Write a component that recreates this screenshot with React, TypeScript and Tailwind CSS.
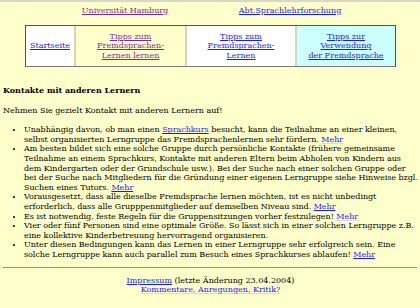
const serif = { fontFamily: '"DejaVu Serif", serif' };

function A({ children, visited = false, faint = false }: { children: React.ReactNode; visited?: boolean; faint?: boolean }) {
  return (
    <a
      className={
        (visited ? "text-[#7a2a9a]" : "text-[#1a1aff]") +
        " underline " +
        (faint ? "decoration-[#d8d8e8]" : "")
      }
    >
      {children}
    </a>
  );
}

const items: React.ReactNode[] = [
  <>
    Unabhängig davon, ob man einen <A>Sprachkurs</A> besucht, kann die Teilnahme an einer kleinen,
    selbst organisierten Lerngruppe das Fremdsprachenlernen sehr fördern. <A faint>Mehr</A>
  </>,
  <>
    Am besten bildet sich eine solche Gruppe durch persönliche Kontakte (frühere gemeinsame Teilnahme an
    einem Sprachkurs, Kontakte mit anderen Eltern beim Abholen von Kindern aus dem Kindergarten oder der
    Grundschule usw.). Bei der Suche nach einer solchen Gruppe oder bei der Suche nach Mitgliedern für die
    Gründung einer eigenen Lerngruppe siehe Hinweise bzgl. Suchen eines Tutors. <A>Mehr</A>
  </>,
  <>
    Vorausgesetzt, dass alle dieselbe Fremdsprache lernen möchten, ist es nicht unbedingt erforderlich,
    dass alle Grupppenmitglieder auf demselben Niveau sind. <A>Mehr</A>
  </>,
  <>
    Es ist notwendig, feste Regeln für die Gruppensitzungen vorher festzulegen! <A faint>Mehr</A>
  </>,
  <>
    Vier oder fünf Personen sind eine optimale Größe. So lässt sich in einer solchen Lerngruppe z.B. eine
    kollektive Kinderbetreuung hervorragend organisieren.
  </>,
  <>
    Unter diesen Bedingungen kann das Lernen in einer Lerngruppe sehr erfolgreich sein. Eine solche
    Lerngruppe kann auch parallel zum Besuch eines Sprachkurses ablaufen! <A>Mehr</A>
  </>,
];

export default function App() {
  return (
    <div
      style={serif}
      className="w-[420px] h-[308px] overflow-hidden bg-[#ffffcc] border-t-2 border-[#d8d8c8] text-[8px] leading-[9.6px] text-black"
    >
      {/* header links */}
      <div className="flex ml-[40px] pt-[4px] h-[23px]">
        <div className="w-[170px] text-center">
          <A visited>Universität Hamburg</A>
        </div>
        <div className="w-[160px] text-center">
          <A>Abt.Sprachlehrforschung</A>
        </div>
      </div>

      {/* navigation table */}
      <div className="ml-[25px] w-[371px] h-[42px] flex border border-[#555] border-b-[#777]">
        <div className="w-[50px] bg-white flex items-center justify-center border-r-2 border-[#d4d4c4]">
          <A>Startseite</A>
        </div>
        <div className="w-[111px] flex items-center justify-center text-center border-r-2 border-[#d4d4c4]">
          <A visited>
            Tipps zum
            <br />
            Fremdsprachen-
            <br />
            Lernen lernen
          </A>
        </div>
        <div className="w-[110px] bg-white flex items-center justify-center text-center border-r-2 border-[#d4d4c4]">
          <A>
            Tipps zum
            <br />
            Fremdsprachen-
            <br />
            Lernen
          </A>
        </div>
        <div className="flex-1 bg-[#ccffff] flex items-center justify-center text-center">
          <A>
            Tipps zur
            <br />
            Verwendung
            <br />
            der Fremdsprache
          </A>
        </div>
      </div>

      <div className="pl-[3px] pr-[2px]">
        <h1 className="font-bold text-[8px] mt-[19px]">Kontakte mit anderen Lernern</h1>
        <p className="mt-[10px]">Nehmen Sie gezielt Kontakt mit anderen Lernern auf!</p>
        <ul className="mt-[10px] pl-[21px] list-disc tracking-[-0.03px]">
          {items.map((it, i) => (
            <li key={i}>{it}</li>
          ))}
        </ul>
        <hr className="mt-[7px] mr-[1px] border-t-[1.5px] border-[#8890a0]" />
        <div className="mt-[8px] text-center">
          <A>Impressum</A> (letzte Änderung 23.04.2004)
          <br />
          <A faint>Kommentare, Anregungen, Kritik?</A>
        </div>
      </div>
    </div>
  );
}
